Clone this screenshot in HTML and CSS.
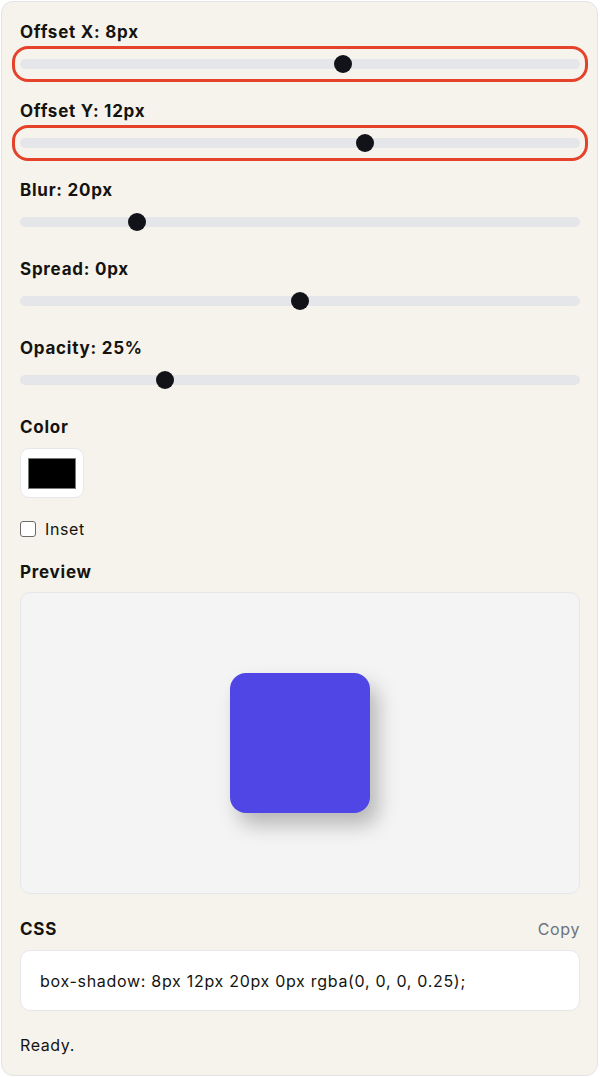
FILE: index.html
```html
<!DOCTYPE html>
<html lang="en">
<head>
<meta charset="utf-8">
<title>Box Shadow Generator</title>
<link rel="stylesheet" href="styles.css">
</head>
<body>
<div class="card">
  <div class="field">
    <div class="label">Offset X: 8px</div>
    <div class="slider highlighted"><div class="track"></div><div class="thumb" style="--v: 0.58"></div></div>
  </div>
  <div class="field">
    <div class="label">Offset Y: 12px</div>
    <div class="slider highlighted"><div class="track"></div><div class="thumb" style="--v: 0.62"></div></div>
  </div>
  <div class="field">
    <div class="label">Blur: 20px</div>
    <div class="slider"><div class="track"></div><div class="thumb" style="--v: 0.2"></div></div>
  </div>
  <div class="field">
    <div class="label">Spread: 0px</div>
    <div class="slider"><div class="track"></div><div class="thumb" style="--v: 0.5"></div></div>
  </div>
  <div class="field">
    <div class="label">Opacity: 25%</div>
    <div class="slider"><div class="track"></div><div class="thumb" style="--v: 0.25"></div></div>
  </div>

  <div class="label color-label">Color</div>
  <div class="swatch"><div class="swatch-fill"></div></div>

  <label class="check-row"><span class="checkbox"></span><span>Inset</span></label>

  <div class="label preview-label">Preview</div>
  <div class="preview"><div class="box"></div></div>

  <div class="css-head">
    <div class="label">CSS</div>
    <div class="copy">Copy</div>
  </div>
  <div class="code">box-shadow: 8px 12px 20px 0px rgba(0, 0, 0, 0.25);</div>

  <div class="status">Ready.</div>
</div>
</body>
</html>
```

FILE: styles.css
```css
* { box-sizing: border-box; }
html, body { margin: 0; padding: 0; background: #ffffff; }
body {
  font-family: "Inter", "Noto Sans", sans-serif;
  color: #111111;
  padding: 1px 2px 1px 1px;
}
.card {
  width: 597px;
  height: 1075px;
  background: #f6f3ec;
  border: 1px solid #e4e4e7;
  border-radius: 12px;
  padding: 18px 17px 0 18px;
  display: flex;
  flex-direction: column;
}
.field {
  display: flex;
  flex-direction: column;
  gap: 10px;
  margin-bottom: 25px;
}
.label {
  font-size: 17px;
  font-weight: 700;
  line-height: 24px;
  letter-spacing: 0.75px;
  color: #15130f;
}
.slider {
  position: relative;
  height: 20px;
}
.slider.highlighted {
  outline: 3px solid #e5422b;
  outline-offset: 5px;
  border-radius: 8px;
}
.track {
  position: absolute;
  left: 0; right: 0;
  top: 5px;
  height: 10px;
  border-radius: 5px;
  background: #e5e6ea;
}
.thumb {
  position: absolute;
  top: 1px;
  left: calc((100% - 18px) * var(--v, 0));
  width: 18px;
  height: 18px;
  border-radius: 50%;
  background: #111318;
}
.color-label { margin-top: 0; }
.swatch {
  margin-top: 9px;
  width: 64px;
  height: 50px;
  background: #ffffff;
  border: 1px solid #e5e7eb;
  border-radius: 9px;
  padding: 9px 7px 8px 7px;
}
.swatch-fill {
  width: 100%;
  height: 100%;
  background: #000000;
  border: 1px solid #7a7a7a;
}
.check-row {
  margin-top: 19px;
  display: flex;
  align-items: center;
  gap: 9px;
  font-size: 16px;
  line-height: 24px;
  letter-spacing: 0.6px;
  color: #15130f;
}
.checkbox {
  width: 16px;
  height: 16px;
  border: 1px solid #6b6b6b;
  border-radius: 3px;
  background: #ffffff;
  margin-left: 0;
}
.preview-label { margin-top: 19px; }
.preview {
  margin-top: 8px;
  height: 302px;
  background: #f4f4f4;
  border: 1px solid #e5e7eb;
  border-radius: 10px;
  display: flex;
  align-items: center;
  justify-content: center;
}
.box {
  width: 140px;
  height: 140px;
  background: #4f46e5;
  border-radius: 16px;
  box-shadow: 8px 12px 20px 0px rgba(0, 0, 0, 0.25);
}
.css-head {
  margin-top: 23px;
  display: flex;
  justify-content: space-between;
  align-items: center;
}
.copy {
  font-size: 16px;
  letter-spacing: 0.6px;
  color: #6b7280;
}
.code {
  margin-top: 9px;
  height: 61px;
  background: #ffffff;
  border: 1px solid #e5e7eb;
  border-radius: 10px;
  padding: 0 19px;
  display: flex;
  align-items: center;
  font-size: 16px;
  letter-spacing: 0.7px;
  color: #15130f;
}
.status {
  margin-top: 22px;
  font-size: 16px;
  line-height: 24px;
  letter-spacing: 0.6px;
  color: #15130f;
}
```
